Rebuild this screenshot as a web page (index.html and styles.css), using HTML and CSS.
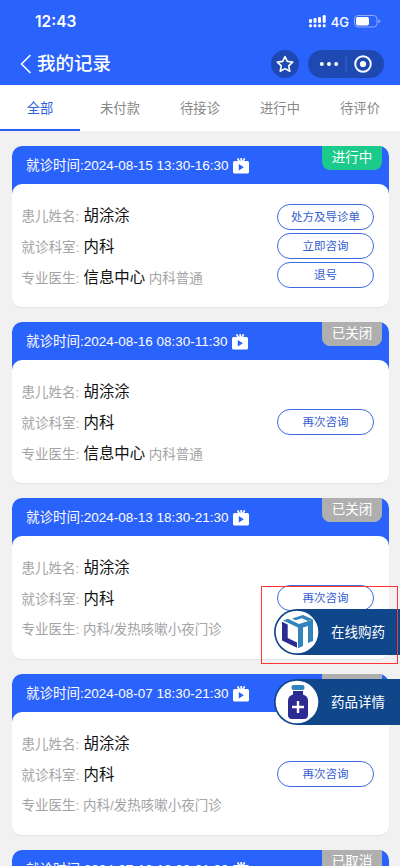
FILE: index.html
```html
<!DOCTYPE html>
<html lang="zh-CN">
<head>
<meta charset="utf-8">
<title>我的记录</title>
<link rel="stylesheet" href="styles.css">
</head>
<body>
<svg class="defs" aria-hidden="true">
  <symbol id="tv" viewBox="0 0 16 16">
    <path d="M4.600 .3 6.300 3.500M8.200 0V3.500M11.600.3 9.900 3.500" stroke="#fff" stroke-width="1.700" fill="none"/>
    <rect y="3" width="16" height="12.600" rx="1.500" fill="#fff"/>
    <path d="M5.800 6v6.400l5-3.200z" fill="#2a62fc"/>
  </symbol>
</svg>
<div class="screen">
  <header class="top">
    <div class="status">
      <span class="clock">12:43</span>
      <svg class="signal" width="18" height="13" viewBox="0 0 18 13" fill="#fff"><rect y="4" width="3" height="4" rx="1.3"/><rect x="4.5" y="3" width="3" height="5" rx="1.3"/><rect x="9" y="2" width="3" height="6" rx="1.3"/><rect x="13.7" y="0" width="3" height="8" rx="1.3"/><rect y="9.2" width="3" height="3" rx="1.3"/><rect x="4.5" y="9.2" width="3" height="3" rx="1.3"/><rect x="9" y="9.2" width="3" height="3" rx="1.3"/><rect x="13.7" y="9.2" width="3" height="3" rx="1.3"/></svg>
      <span class="net">4G</span>
      <svg class="battery" width="27" height="13" viewBox="0 0 27 13"><rect x=".5" y=".5" width="22.5" height="11.5" rx="3.5" fill="none" stroke="#8eacff"/><rect x="2" y="2" width="13" height="8.5" rx="2" fill="#fff"/><path d="M24.5 4.3q2 .5 1.8 2t-1.8 2z" fill="#8eacff"/></svg>
    </div>
    <div class="nav">
      <svg class="back" width="12" height="20" viewBox="0 0 12 20"><path d="M10.5 1 1.5 10l9 9" fill="none" stroke="#fff" stroke-width="1.5"/></svg>
      <h1>我的记录</h1>
      <span class="star"><svg width="18" height="18" viewBox="0 0 18 18"><path d="m9 1.500 2.300 4.900 5.400.7-4 3.700 1.100 5.400L9 13.600l-4.800 2.600 1.100-5.400-4-3.700 5.400-.7z" fill="none" stroke="#fff" stroke-width="1.600" stroke-linejoin="round"/></svg></span>
      <span class="capsule"><svg width="76" height="28" viewBox="0 0 76 28"><g fill="#fff"><circle cx="13.8" cy="14" r="2"/><circle cx="21" cy="14" r="2"/><circle cx="28.2" cy="14" r="2"/><circle cx="55" cy="14" r="3.1"/></g><path d="M38 5.500v17" stroke="#4166c2"/><circle cx="55" cy="14" r="7.800" fill="none" stroke="#fff" stroke-width="1.900"/></svg></span>
    </div>
  </header>
  <nav class="tabs">
    <span class="tab active">全部</span><span class="tab">未付款</span><span class="tab">待接诊</span><span class="tab">进行中</span><span class="tab">待评价</span>
  </nav>
  <main class="list">
    <article class="card">
      <div class="head"><span>就诊时间:2024-08-15 13:30-16:30</span><svg class="tv"><use href="#tv"/></svg><b class="tag live">进行中</b></div>
      <div class="body">
        <div class="info"><p>患儿姓名: <strong>胡涂涂</strong></p><p>就诊科室: <strong>内科</strong></p><p>专业医生: <strong>信息中心</strong> 内科普通</p></div>
        <div class="actions"><span class="btn">处方及导诊单</span><span class="btn">立即咨询</span><span class="btn">退号</span></div>
      </div>
    </article>
    <article class="card">
      <div class="head"><span>就诊时间:2024-08-16 08:30-11:30</span><svg class="tv"><use href="#tv"/></svg><b class="tag">已关闭</b></div>
      <div class="body">
        <div class="info"><p>患儿姓名: <strong>胡涂涂</strong></p><p>就诊科室: <strong>内科</strong></p><p>专业医生: <strong>信息中心</strong> 内科普通</p></div>
        <div class="actions"><span class="btn">再次咨询</span></div>
      </div>
    </article>
    <article class="card">
      <div class="head"><span>就诊时间:2024-08-13 18:30-21:30</span><svg class="tv"><use href="#tv"/></svg><b class="tag">已关闭</b></div>
      <div class="body">
        <div class="info"><p>患儿姓名: <strong>胡涂涂</strong></p><p>就诊科室: <strong>内科</strong></p><p>专业医生: 内科/发热咳嗽小夜门诊</p></div>
        <div class="actions"><span class="btn">再次咨询</span></div>
      </div>
    </article>
    <article class="card">
      <div class="head"><span>就诊时间:2024-08-07 18:30-21:30</span><svg class="tv"><use href="#tv"/></svg><b class="tag blank"></b></div>
      <div class="body">
        <div class="info"><p>患儿姓名: <strong>胡涂涂</strong></p><p>就诊科室: <strong>内科</strong></p><p>专业医生: 内科/发热咳嗽小夜门诊</p></div>
        <div class="actions"><span class="btn">再次咨询</span></div>
      </div>
    </article>
    <article class="card">
      <div class="head"><span>就诊时间:2024-07-18 18:30-21:30</span><svg class="tv"><use href="#tv"/></svg><b class="tag">已取消</b></div>
    </article>
  </main>
  <div class="float buy">
    <svg width="46" height="46" viewBox="0 0 46 46"><circle cx="23" cy="23" r="21.300" fill="#fff"/><path d="M8 12.800 13.700 15.500V29L23 33.500v5.200L8 31.500z" fill="#2c2a93"/><path d="M9 11.500 14 9.800 25 15 39 10.500V32l-5 2V17l-5 1.500V37l-5 2.200V18.500z" fill="#3384bd"/><path d="M18 9.500 29 6l10 4.500-5 1.600-6-2.800-6.500 2z" fill="#3384bd"/></svg>
    <span>在线购药</span>
  </div>
  <div class="float detail">
    <svg width="46" height="46" viewBox="0 0 46 46"><circle cx="23" cy="23" r="21.300" fill="#fff"/><rect x="17.500" y="6" width="13" height="5" rx="2" fill="#3384bd"/><path d="M19 12h10v3.500q5 1.500 5 6V36q0 4-4 4H18q-4 0-4-4V21.500q0-4.500 5-6z" fill="#2c2a93"/><path d="M24 22v12M18 28h12" stroke="#fff" stroke-width="2.400"/></svg>
    <span>药品详情</span>
  </div>
  <div class="marker"></div>
</div>
</body>
</html>
```
FILE: styles.css
```css
* { box-sizing: border-box; }
body { margin: 0; font-family: "Liberation Sans", "Noto Sans CJK SC", sans-serif; }
.defs { position: absolute; width: 0; height: 0; }
.screen { position: relative; width: 400px; height: 866px; overflow: hidden; background: #f1f1f1; }
.top { height: 85px; background: #2a62fc; color: #fff; }
.status { height: 43px; display: flex; align-items: center; padding: 0 19px 0 35px; }
.clock { font: 600 15.500px/20px Inter, sans-serif; margin-right: auto; }
.signal { margin-right: 4px; }
.net { font: 500 13px/20px Inter, sans-serif; margin-right: 5px; }
.nav { display: flex; align-items: center; height: 42px; padding: 0 16.500px 0 20px; }
h1 { margin: 0 auto 0 5px; font-size: 18.500px; line-height: 28px; font-weight: 500; }
.star { display: flex; align-items: center; justify-content: center; width: 28px; height: 28px; border-radius: 14px; background: #1e48b2; margin-right: 8.500px; }
.capsule { width: 76px; height: 28px; border-radius: 14px; background: #1e48b2; }
.capsule svg { display: block; }
.tabs { display: flex; height: 46px; background: #fff; }
.tab { width: 80px; text-align: center; font-size: 13.300px; line-height: 48px; color: #888; border-bottom: 2.500px solid transparent; }
.active { color: #2f5fdc; border-bottom-color: #2a5ff0; }
.list { padding: 15px 11px 0 12px; display: flex; flex-direction: column; gap: 15px; }
.card { flex: none; height: 161px; border-radius: 10px; overflow: hidden; background: linear-gradient(#2a62fc 0 60px, #fff 60px); box-shadow: 0 1px 1px #e2e3e8; }
.head { height: 38px; display: flex; align-items: center; padding: 0 7px 0 14px; font-size: 13.500px; line-height: 20px; color: #fff; }
.head span { padding-top: 2px; }
.tv { width: 16px; height: 16px; margin: 2px 0 0 4px; }
.tag { align-self: flex-start; margin-left: auto; width: 60px; height: 24px; border-radius: 0 0 8px 8px; background: #afafaf; font-size: 13.500px; line-height: 24px; font-weight: 400; text-align: center; }
.live { background: #1bcb8b; }
.body { height: 123px; display: flex; justify-content: space-between; padding: 0 15px 0 9.500px; background: #fff; border-radius: 10px; }
.info { padding-top: 16px; }
p { margin: 0; height: 31px; line-height: 31px; font-size: 13.500px; color: #a4a4a4; white-space: nowrap; }
strong { margin-left: .5px; font-size: 15.400px; font-weight: 400; color: #111; }
.actions { display: flex; flex-direction: column; justify-content: center; gap: 3px; }
.btn { width: 97px; height: 26px; border: 1px solid #3d6be0; border-radius: 13px; text-align: center; font-size: 11.500px; line-height: 24px; color: #3560ce; background: #fff; }
.float { position: absolute; right: 0; width: 126px; height: 46px; display: flex; align-items: center; border-radius: 23px 0 0 23px; background: #10468a; color: #fff; font-size: 13.500px; }
.float span { margin-left: 11px; padding-bottom: 2px; }
.buy { top: 609px; }
.detail { top: 679px; }
.marker { position: absolute; left: 261px; top: 586px; width: 137px; height: 78px; border: 1px solid #f33; }
```
